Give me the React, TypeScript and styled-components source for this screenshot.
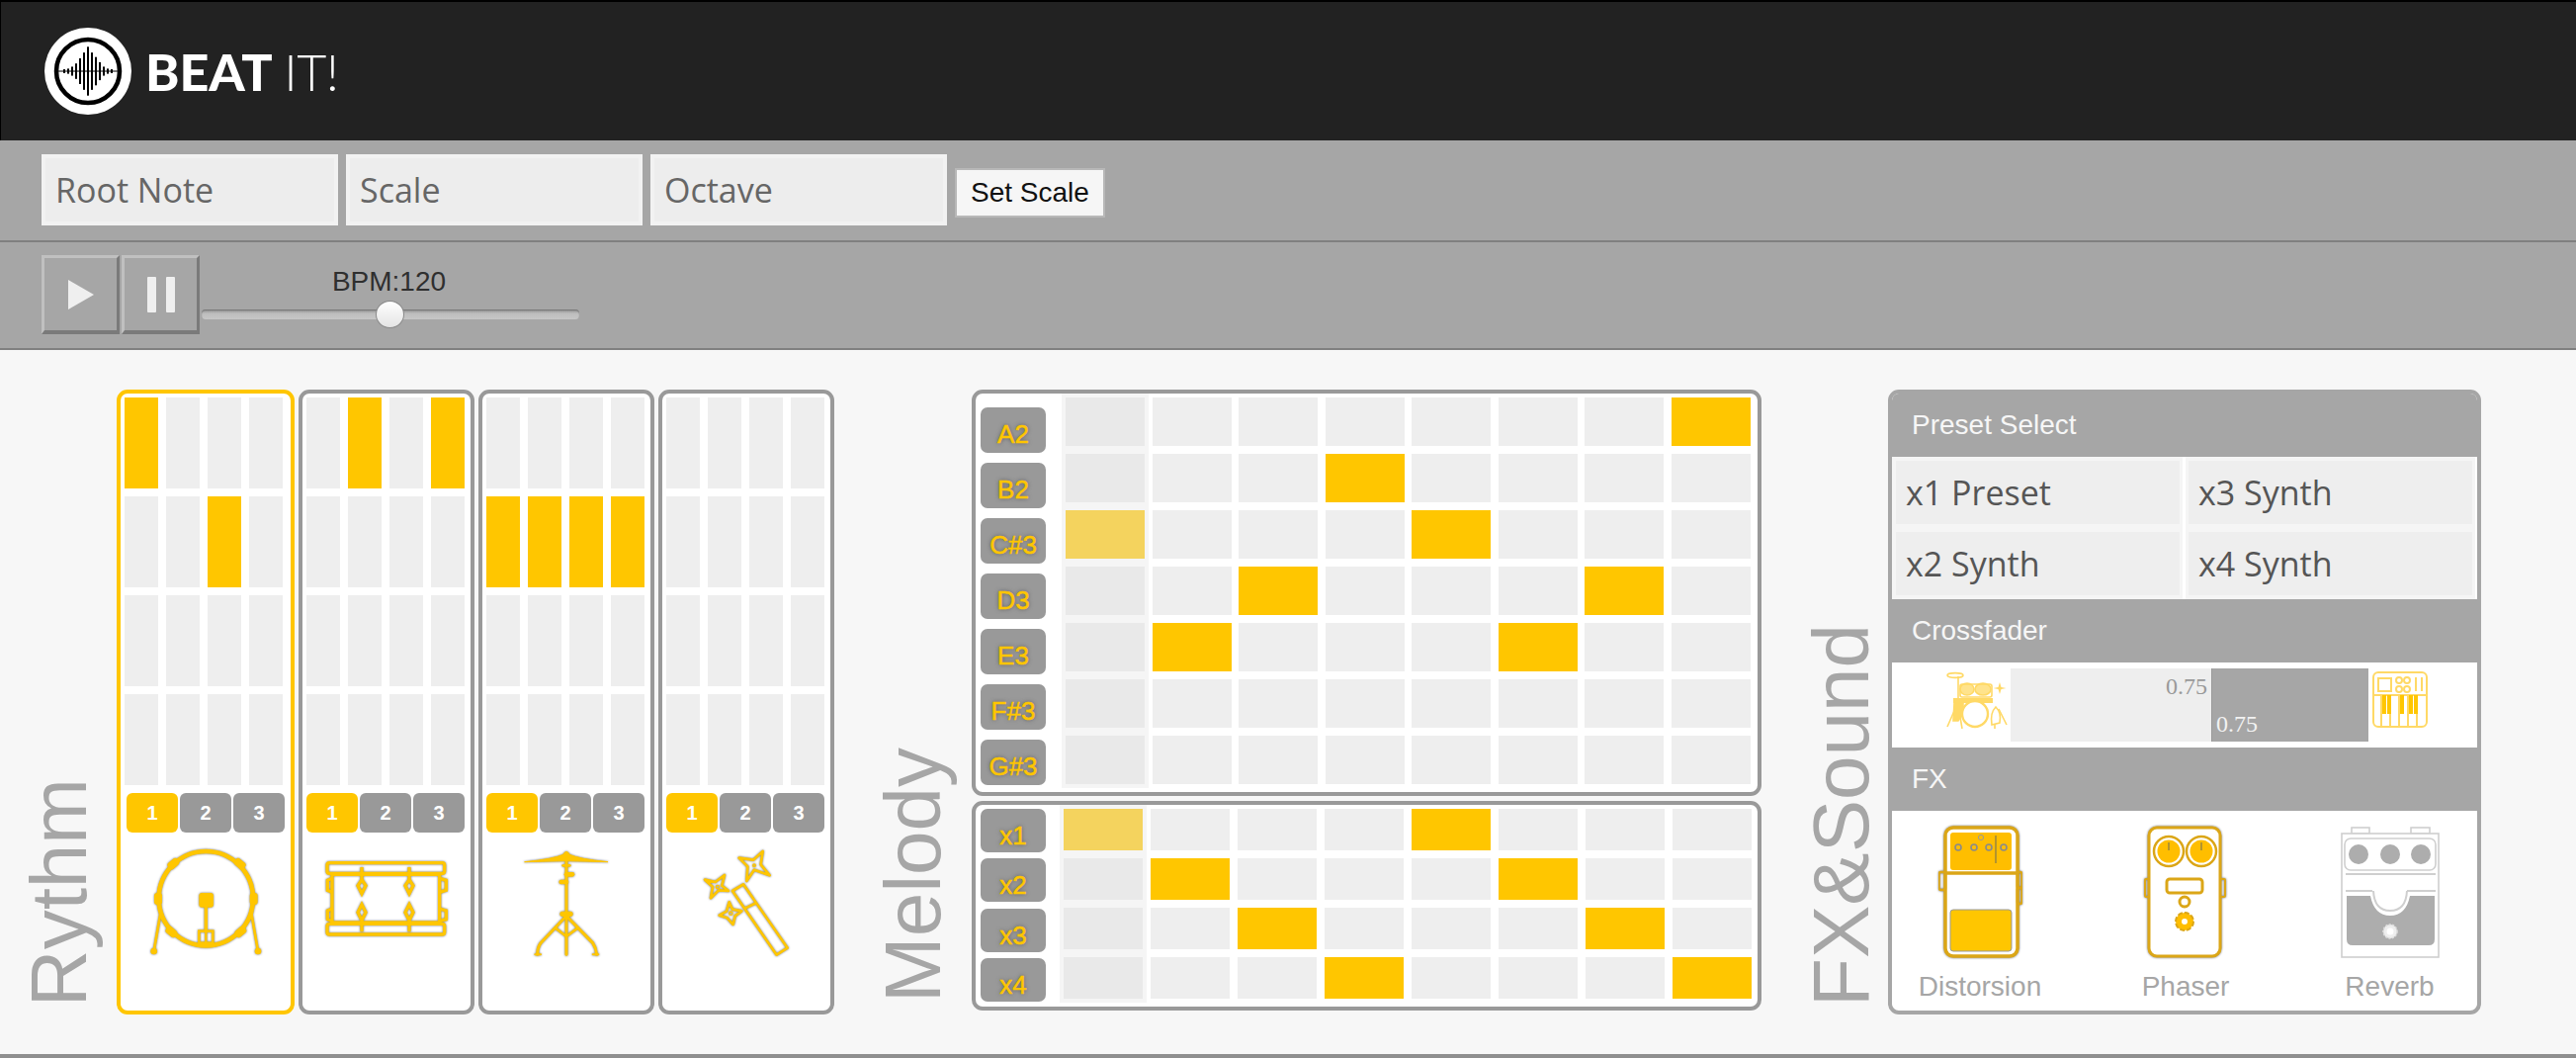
import React from "react";
import styled, { createGlobalStyle } from "styled-components";

const Y = "#ffc600";
const GREY = "#a6a6a6";
const SANS = `"Liberation Sans", Arial, sans-serif`;

const Global = createGlobalStyle`
  html, body { margin: 0; padding: 0; background: #f7f7f7; }
  body { width: 2606px; height: 1070px; overflow: hidden; font-family: ${SANS}; }
  * { box-sizing: border-box; }
`;

const Page = styled.div`
  width: 2606px;
  height: 1070px;
  display: flex;
  flex-direction: column;
  background: #f7f7f7;
`;

const Header = styled.header`
  height: 142px;
  flex: none;
  background: #222;
  border-top: 2px solid #000;
  border-left: 1px solid #000;
  display: flex;
  align-items: center;
  padding: 0 0 1px 44px;
`;
const Brand = styled.div`
  margin-left: 14px;
  font-family: Lato, sans-serif;
  font-size: 52px;
  line-height: 1;
  color: #fff;
  letter-spacing: -0.5px;
  font-weight: 300;
  b { font-weight: 900; letter-spacing: 0; margin-right: -2px; }
`;

const ScaleBar = styled.div`
  height: 103px;
  flex: none;
  background: ${GREY};
  border-bottom: 2px solid #808080;
  display: flex;
  align-items: flex-start;
  gap: 8px;
  padding: 14px 0 0 42px;
`;
const Field = styled.div`
  width: 300px;
  height: 72px;
  background: #ededed;
  border: 4px solid #f2f2f2;
  color: #666;
  font: 400 34px/64px "Open Sans", sans-serif;
  padding-left: 10px;
`;
const SetScale = styled.button`
  width: 152px;
  height: 50px;
  margin-top: 14px;
  background: #f6f6f6;
  border: 2px solid #b8b8b8;
  color: #111;
  font: 400 28px ${SANS};
  padding: 0;
`;

const Transport = styled.div`
  height: 109px;
  flex: none;
  background: ${GREY};
  border-bottom: 2px solid #808080;
  display: flex;
  align-items: flex-start;
  padding: 13px 0 0 42px;
  gap: 2px;
`;
const TransportButton = styled.button`
  width: 79px;
  height: 80px;
  padding: 0;
  background: ${GREY};
  border-style: solid;
  border-width: 3px 3px 4px 3px;
  border-color: #c0c0c0 #7a7a7a #7a7a7a #c0c0c0;
  display: flex;
  align-items: center;
  justify-content: center;
`;
const BpmBox = styled.div`
  width: 382px;
  display: flex;
  flex-direction: column;
  align-items: center;
  padding-top: 11px;
`;
const BpmLabel = styled.div`
  font-size: 28px;
  line-height: 32px;
  color: #2f2f2f;
  margin-left: -3px;
`;
const Track = styled.div`
  position: relative;
  margin-top: 12px;
  width: 382px;
  height: 10px;
  border-radius: 4px;
  background: linear-gradient(#8b8b8b, #bdbdbd 40%, #c6c6c6);
  box-shadow: inset 0 1px 1px #777;
`;
const Thumb = styled.div`
  position: absolute;
  left: 176px;
  top: -9px;
  width: 29px;
  height: 28px;
  border-radius: 50%;
  background: linear-gradient(#fff, #e4e4e4);
  border: 1px solid #8a8a8a;
`;

const Main = styled.main`
  flex: 1;
  min-height: 0;
  border-bottom: 4px solid #8f8f8f;
  padding-top: 40px;
  display: grid;
  grid-template-columns: 844px 938px 1fr;
  align-items: start;
`;
const Section = styled.section<{ $titleWidth: number }>`
  display: grid;
  grid-template-columns: ${(p) => p.$titleWidth}px auto;
  justify-content: start;
`;
const Title = styled.h2<{ $left: number }>`
  margin: 0 0 8px ${(p) => p.$left}px;
  align-self: end;
  justify-self: start;
  writing-mode: vertical-rl;
  transform: rotate(180deg);
  font: 400 80px/80px ${SANS};
  color: ${GREY};
  white-space: nowrap;
`;

const Channels = styled.div`
  display: grid;
  grid-template-columns: 180px repeat(3, 178px);
  gap: 4px;
`;
const Channel = styled.div<{ $on?: boolean }>`
  height: 632px;
  background: #fff;
  border: 4px solid ${(p) => (p.$on ? Y : "#999")};
  border-radius: 11px;
  padding: 4px 0 0 4px;
  display: flex;
  flex-direction: column;
`;
const StepGrid = styled.div`
  width: 160px;
  display: grid;
  grid-template-columns: repeat(4, 34px);
  grid-auto-rows: 92px;
  column-gap: 8px;
  row-gap: 8px;
`;
const Cell = styled.div<{ $on?: boolean; $head?: boolean }>`
  background: ${(p) =>
    p.$on ? (p.$head ? "#f4d35e" : Y) : p.$head ? "#e9e9e9" : "#eee"};
  ${(p) => (p.$head ? "box-shadow: 0 0 0 4px #f5f5f5;" : "")}
`;
const KitRow = styled.div<{ $shift?: boolean }>`
  margin: 8px 0 0 ${(p) => (p.$shift ? 2 : 0)}px;
  display: flex;
  gap: 2px;
`;
const KitButton = styled.div<{ $on?: boolean }>`
  width: 52px;
  height: 40px;
  border-radius: 6px;
  background: ${(p) => (p.$on ? Y : "#999")};
  color: #fff;
  font: 700 20px/40px ${SANS};
  text-align: center;
`;
const InstrumentIcon = styled.svg<{ $top: number; $left: number }>`
  display: block;
  margin: ${(p) => p.$top}px 0 0 ${(p) => p.$left}px;
  filter: drop-shadow(0 0 1px rgba(100, 100, 100, 0.9));
`;

const MelodyStack = styled.div`
  display: flex;
  flex-direction: column;
  gap: 5px;
`;
const MelodyPanel = styled.div<{ $height: number; $labelTop: number; $cellLeft: number }>`
  width: 799px;
  height: ${(p) => p.$height}px;
  background: #fff;
  border: 4px solid #999;
  border-radius: 11px;
  display: grid;
  grid-template-columns: 66px auto;
  column-gap: ${(p) => p.$cellLeft}px;
  justify-content: start;
  padding: 0 0 0 5px;
  & > :first-child { padding-top: ${(p) => p.$labelTop}px; }
  & > :last-child { margin-top: 4px; }
`;
const Labels = styled.div<{ $h: number; $gap: number }>`
  display: flex;
  flex-direction: column;
  gap: ${(p) => p.$gap}px;
  & > * { height: ${(p) => p.$h}px; }
`;
const NoteLabel = styled.div`
  background: #999;
  border-radius: 7px;
  color: ${Y};
  font: 400 26px/54px ${SANS};
  text-align: center;
  -webkit-text-stroke: 0.5px ${Y};
  text-shadow: 0 0 4px #555;
`;
const PadGrid = styled.div<{ $w: number; $h: number; $rg: number; $cg: number }>`
  display: grid;
  grid-template-columns: repeat(8, ${(p) => p.$w}px);
  grid-auto-rows: ${(p) => p.$h}px;
  row-gap: ${(p) => p.$rg}px;
  column-gap: ${(p) => p.$cg}px;
  align-content: start;
`;

const FxPanel = styled.div`
  width: 600px;
  height: 632px;
  background: #fff;
  border: 4px solid ${GREY};
  border-radius: 11px;
  overflow: hidden;
  display: flex;
  flex-direction: column;
`;
const FxHeader = styled.div`
  height: 64px;
  flex: none;
  background: ${GREY};
  color: #f6f6f6;
  font: 400 28px/64px ${SANS};
  padding-left: 20px;
`;
const PresetGrid = styled.div`
  height: 144px;
  flex: none;
  background:
    linear-gradient(#fff, #fff) 294px 0 / 3px 100% no-repeat,
    linear-gradient(#fff, #fff) 100% 0 / 2px 100% no-repeat,
    #f5f5f5;
  display: grid;
  grid-template-columns: 287px 287px;
  grid-auto-rows: 64px;
  column-gap: 9px;
  row-gap: 8px;
  padding: 4px 0 0 4px;
`;
const Preset = styled.div`
  background: #eee;
  color: #555;
  font: 400 34px/64px "Open Sans", sans-serif;
  padding-left: 10px;
  white-space: pre;
`;
const FaderRow = styled.div`
  height: 86px;
  flex: none;
  display: flex;
  align-items: flex-start;
  padding: 6px 0 0 55px;
`;
const FaderIcon = styled.svg<{ $top: number; $gap: number }>`
  flex: none;
  display: block;
  margin: ${(p) => p.$top}px ${(p) => p.$gap}px 0 ${(p) => p.$gap}px;
`;
const Fader = styled.div`
  margin-left: 3px;
  width: 362px;
  height: 74px;
  display: flex;
  font: 400 24px/1 "Liberation Serif", serif;
`;
const FaderSide = styled.div<{ $w: number; $dark?: boolean }>`
  width: ${(p) => p.$w}px;
  background: ${(p) => (p.$dark ? GREY : "#eee")};
  color: ${(p) => (p.$dark ? "#f2f2f2" : "#999")};
  display: flex;
  justify-content: ${(p) => (p.$dark ? "flex-start" : "flex-end")};
  align-items: ${(p) => (p.$dark ? "flex-end" : "flex-start")};
  padding: ${(p) => (p.$dark ? "0 0 6px 4px" : "6px 4px 0 0")};
  ${(p) => (p.$dark ? "border-left: 1px solid #999;" : "")}
`;
const FxGrid = styled.div`
  flex: 1;
  display: grid;
  grid-template-columns: 178px 238px 175px;
  padding-top: 15px;
`;
const FxItem = styled.div`
  display: flex;
  flex-direction: column;
  align-items: center;
  color: ${GREY};
  font: 400 28px/32px ${SANS};
  gap: 13px;
`;
const FxIcon = styled.svg<{ $soft?: boolean }>`
  display: block;
  ${(p) => (p.$soft ? "" : "filter: drop-shadow(0 0 1px rgba(100, 100, 100, 0.9));")}
`;

const Logo = () => {
  const hs = [3, 4, 7, 12, 20, 29, 38, 29, 22, 14, 7, 4, 3];
  return (
    <svg width="88" height="88" viewBox="0 0 88 88">
      <circle cx="44" cy="44" r="44" fill="#fff" />
      <circle cx="44" cy="44" r="32" fill="#fff" stroke="#000" strokeWidth="4.5" />
      <line x1="14" y1="44" x2="74" y2="44" stroke="#000" strokeWidth="1" />
      {hs.map((h, i) => (
        <rect key={i} x={44 - 1 + (i - 6) * 4} y={44 - h * 0.65} width="2" height={h * 1.3} fill="#000" />
      ))}
    </svg>
  );
};

const BassDrum = () => (
  <InstrumentIcon $top={15} $left={24} width="117" height="113" viewBox="120 200 351 339" fill="none" stroke={Y} strokeWidth="10" strokeLinecap="round">
    <circle cx="295" cy="355" r="143" strokeWidth="14" />
    <g fill={Y} stroke="none">
      <rect x="138" y="338" width="24" height="36" rx="9" />
      <rect x="428" y="338" width="24" height="36" rx="9" />
      <rect x="178" y="238" width="36" height="24" rx="9" transform="rotate(-40 196 250)" />
      <rect x="380" y="238" width="36" height="24" rx="9" transform="rotate(40 398 250)" />
      <rect x="172" y="444" width="36" height="24" rx="9" transform="rotate(40 190 456)" />
      <rect x="382" y="444" width="36" height="24" rx="9" transform="rotate(-40 400 456)" />
      <rect x="274" y="338" width="44" height="44" rx="9" />
      <circle cx="137" cy="515" r="10" />
      <circle cx="453" cy="515" r="10" />
    </g>
    <line x1="295" y1="375" x2="295" y2="455" />
    <rect x="274" y="454" width="42" height="36" strokeWidth="8" />
    <line x1="295" y1="454" x2="295" y2="490" strokeWidth="7" />
    <line x1="157" y1="400" x2="137" y2="515" strokeWidth="8" />
    <line x1="433" y1="400" x2="453" y2="515" strokeWidth="8" />
  </InstrumentIcon>
);

const Snare = () => (
  <InstrumentIcon $top={26} $left={15} width="130" height="80" viewBox="645 235 390 240" fill="none" stroke={Y} strokeWidth="10">
    <rect x="663" y="249" width="356" height="32" rx="7" />
    <rect x="663" y="434" width="356" height="32" rx="7" />
    <rect x="678" y="284" width="326" height="146" />
    {[768, 912].map((x) => (
      <g key={x}>
        <line x1={x} y1="262" x2={x} y2="300" />
        <path d={`M${x} 300 l12 18 -12 24 -12 -24z`} />
        <line x1={x} y1="425" x2={x} y2="458" />
        <path d={`M${x} 375 l12 24 -12 24 -12 -24z`} />
      </g>
    ))}
    <path d="M678 296 l-14 6 v30 l14 6" />
    <path d="M678 388 l-14 6 v26 l14 6" />
    <path d="M1004 296 l20 6 v30 l-20 6" />
    <path d="M1004 388 l20 6 v26 l-20 6" />
  </InstrumentIcon>
);

const HiHat = () => (
  <InstrumentIcon $top={15} $left={35} width="93" height="113" viewBox="140 200 279 339" fill="none" stroke={Y} strokeWidth="9" strokeLinecap="round" strokeLinejoin="round">
    <path d="M152 244 Q240 235 268 222 Q278 204 288 222 Q316 235 404 244 Q278 238 152 244Z" fill={Y} strokeWidth="3" />
    <line x1="278" y1="235" x2="278" y2="525" />
    <line x1="262" y1="305" x2="278" y2="305" strokeWidth="14" />
    <line x1="278" y1="282" x2="296" y2="282" strokeWidth="14" />
    <line x1="268" y1="255" x2="288" y2="255" strokeWidth="8" />
    <line x1="266" y1="402" x2="290" y2="402" strokeWidth="16" />
    <path d="M278 408 L200 490 Q190 505 190 525" />
    <path d="M278 408 L358 490 Q368 505 370 525" />
    <path d="M245 445 L278 470 L312 445" strokeWidth="8" />
    <line x1="183" y1="525" x2="200" y2="525" strokeWidth="6" />
    <line x1="358" y1="525" x2="375" y2="525" strokeWidth="6" />
  </InstrumentIcon>
);

const Wand = () => (
  <InstrumentIcon $top={15} $left={33} width="93" height="113" viewBox="680 200 279 339" fill="none" stroke={Y} strokeWidth="8" strokeLinejoin="round">
    <path d="M782 332 L815 312 L949 505 L916 526Z" />
    <line x1="820" y1="385" x2="855" y2="368" />
    <path d="M874 212 L868 252 L895 285 L848 268 L825 302 L828 258 L802 232 L845 238Z" />
    <path d="M758 284 L750 316 L770 332 L740 330 L716 354 L722 320 L698 298 L730 305Z" />
    <path d="M772 366 L782 388 L810 393 L790 408 L784 434 L766 414 L742 406 L764 394Z" />
    <circle cx="848" cy="255" r="4" strokeWidth="4" />
    <circle cx="737" cy="320" r="5" strokeWidth="4" />
    <circle cx="777" cy="400" r="5" strokeWidth="4" />
  </InstrumentIcon>
);

const KitIcon = () => (
  <FaderIcon $top={3} $gap={0} width="62" height="58" viewBox="0 0 62 58" fill="none" stroke="#ffd966" strokeWidth="1.6">
    <ellipse cx="9" cy="4" rx="8" ry="2.4" />
    <line x1="12" y1="5" x2="12" y2="28" />
    <ellipse cx="21" cy="18" rx="7" ry="6" fill="#ffe38c" />
    <ellipse cx="37" cy="18" rx="8" ry="6" fill="#ffe38c" />
    <rect x="14" y="13" width="32" height="13" rx="2" />
    <path d="M54 11 l1.5 5 5 1 -5 1 -1.5 5 -1.5 -5 -5 -1 5 -1z" fill="#ffd966" stroke="none" />
    <rect x="7" y="27" width="40" height="5" fill="#ffd966" stroke="none" />
    <path d="M8 32 h9 v10 l-5 8 h-5z" fill="#ffd966" />
    <circle cx="29" cy="43" r="13" strokeWidth="2.4" fill="#fff" />
    <path d="M8 40 L1 56 M14 46 L16 58" />
    <path d="M50 36 Q56 42 54 52 L46 54 Q44 42 50 36Z" fill="#fff" />
    <path d="M53 38 L61 54 M49 54 V58" />
  </FaderIcon>
);

const SynthIcon = () => (
  <FaderIcon $top={3} $gap={4} width="56" height="57" viewBox="0 0 56 57" fill="none" stroke="#ffd966" strokeWidth="2">
    <rect x="1" y="1" width="54" height="55" rx="5" />
    <line x1="1" y1="24" x2="55" y2="24" />
    <rect x="6" y="7" width="13" height="13" />
    <circle cx="27" cy="9" r="3" /><circle cx="35" cy="9" r="3" />
    <circle cx="27" cy="18" r="3" /><circle cx="35" cy="18" r="3" />
    <line x1="44" y1="6" x2="44" y2="20" /><line x1="50" y1="6" x2="50" y2="20" />
    {[9, 18, 27, 36, 45].map((x) => (
      <line key={x} x1={x} y1="24" x2={x} y2="56" />
    ))}
    {[9, 14, 27, 36, 41].map((x) => (
      <rect key={x} x={x + 1} y="24" width="4" height="19" fill={Y} stroke="none" />
    ))}
  </FaderIcon>
);

const PEDAL = "#dba617";
const Distortion = () => (
  <FxIcon width="85" height="134" viewBox="0 0 85 134" fill="none" stroke={PEDAL} strokeWidth="3.5">
    <rect x="7" y="2" width="73" height="130" rx="8" fill="#fff" />
    <rect x="0.5" y="47" width="6.5" height="18" rx="2" strokeWidth="2.5" />
    <rect x="80" y="47" width="4.5" height="16" rx="2" strokeWidth="2.5" />
    <rect x="80" y="63" width="4.5" height="16" rx="2" strokeWidth="2.5" />
    <rect x="12" y="7" width="62" height="38" rx="3" fill="#ffbe00" stroke="none" />
    <line x1="7" y1="48" x2="80" y2="48" />
    {[20, 36, 51, 66].map((x) => (
      <circle key={x} cx={x} cy="22" r="3" stroke="#8a8a8a" strokeWidth="1.6" fill="#ffbe00" />
    ))}
    <circle cx="43" cy="12" r="2.6" stroke="#999" strokeWidth="1" />
    <line x1="58" y1="10" x2="58" y2="38" stroke="#a08a3a" strokeWidth="1.6" />
    <rect x="12" y="85" width="62" height="42" rx="3" fill={Y} stroke="#999" strokeWidth="1" />
  </FxIcon>
);
const Phaser = () => (
  <FxIcon width="84" height="134" viewBox="0 0 84 134" fill="none" stroke={PEDAL} strokeWidth="3">
    <rect x="5" y="2" width="72" height="130" rx="8" fill="#fff" />
    <rect x="1" y="54" width="4" height="18" rx="1" strokeWidth="2" />
    <rect x="77" y="54" width="5" height="18" rx="1" strokeWidth="2" />
    {[25, 58].map((x) => (
      <g key={x}>
        <circle cx={x} cy="26" r="15" strokeWidth="2.5" />
        <circle cx={x} cy="26" r="11.5" fill="#ffbe00" stroke="none" />
        <line x1={x} y1="17" x2={x} y2="25" stroke="#a08a3a" strokeWidth="1.6" />
      </g>
    ))}
    <rect x="23" y="54" width="36" height="14" rx="3" />
    <circle cx="41" cy="77" r="5" fill="#fff" />
    <circle cx="41" cy="97" r="9" fill="#ffbe00" stroke={PEDAL} strokeWidth="2" strokeDasharray="5 2" />
    <circle cx="41" cy="97" r="3" fill="#fff" stroke="none" />
  </FxIcon>
);
const Reverb = () => (
  <FxIcon $soft width="100" height="134" viewBox="0 0 100 134" fill="none" stroke="#cfcfcf" strokeWidth="1.6">
    <rect x="11" y="2" width="18" height="6" />
    <rect x="71" y="2" width="19" height="6" />
    <rect x="1" y="8" width="98" height="125" fill="#fff" />
    <rect x="4" y="13" width="92" height="32" rx="6" />
    {[18, 50, 81].map((x) => (
      <circle key={x} cx={x} cy="29" r="10" fill="#adadad" stroke="none" />
    ))}
    <line x1="5" y1="49" x2="96" y2="49" strokeWidth="2" />
    <line x1="5" y1="66" x2="32" y2="66" strokeWidth="2" />
    <line x1="67" y1="66" x2="96" y2="66" strokeWidth="2" />
    <path d="M33 66 Q34 86 50 86 Q66 86 67 66" strokeWidth="2" />
    <path d="M6 71 H30 Q34 91 50 91 Q66 91 70 71 H95 V115 Q95 121 89 121 H12 Q6 121 6 115Z" fill="#adadad" stroke="none" />
    <circle cx="50" cy="107" r="7" fill="#eee" stroke="#ddd" strokeDasharray="2 1.5" />
    <circle cx="50" cy="107" r="3.5" fill="#fff" stroke="none" />
  </FxIcon>
);

const KITS: { steps: number[]; icon: React.ReactNode }[] = [
  { steps: [0, 6], icon: <BassDrum /> },
  { steps: [1, 3], icon: <Snare /> },
  { steps: [4, 5, 6, 7], icon: <HiHat /> },
  { steps: [], icon: <Wand /> },
];

const NOTES: [string, number[]][] = [
  ["A2", [7]],
  ["B2", [3]],
  ["C#3", [0, 4]],
  ["D3", [2, 6]],
  ["E3", [1, 5]],
  ["F#3", []],
  ["G#3", []],
];
const SYNTHS: [string, number[]][] = [
  ["x1", [0, 4]],
  ["x2", [1, 5]],
  ["x3", [2, 6]],
  ["x4", [3, 7]],
];

const pads = (rows: [string, number[]][]) =>
  rows.flatMap(([name, on]) =>
    Array.from({ length: 8 }, (_, c) => (
      <Cell key={name + c} $on={on.includes(c)} $head={c === 0} />
    ))
  );

export default function App() {
  return (
    <Page>
      <Global />
      <Header>
        <Logo />
        <Brand>
          <b>BEAT</b> IT!
        </Brand>
      </Header>
      <ScaleBar>
        <Field>Root Note</Field>
        <Field>Scale</Field>
        <Field>Octave</Field>
        <SetScale>Set Scale</SetScale>
      </ScaleBar>
      <Transport>
        <TransportButton aria-label="Play">
          <svg width="28" height="30" viewBox="0 0 28 30">
            <path d="M1 0 L27 15 L1 30Z" fill="#efefef" />
          </svg>
        </TransportButton>
        <TransportButton aria-label="Pause">
          <svg width="30" height="36" viewBox="0 0 30 36">
            <rect x="1" width="9" height="36" rx="1" fill="#efefef" />
            <rect x="20" width="9" height="36" rx="1" fill="#efefef" />
          </svg>
        </TransportButton>
        <BpmBox>
          <BpmLabel>BPM:120</BpmLabel>
          <Track>
            <Thumb />
          </Track>
        </BpmBox>
      </Transport>
      <Main>
        <Section $titleWidth={118}>
          <Title $left={20}>Rythm</Title>
          <Channels>
            {KITS.map((k, i) => (
              <Channel key={i} $on={i === 0}>
                <StepGrid>
                  {Array.from({ length: 16 }, (_, s) => (
                    <Cell key={s} $on={k.steps.includes(s)} />
                  ))}
                </StepGrid>
                <KitRow $shift={i === 0}>
                  <KitButton $on>1</KitButton>
                  <KitButton>2</KitButton>
                  <KitButton>3</KitButton>
                </KitRow>
                {k.icon}
              </Channel>
            ))}
          </Channels>
        </Section>
        <Section $titleWidth={139}>
          <Title $left={40}>Melody</Title>
          <MelodyStack>
            <MelodyPanel $height={411} $labelTop={14} $cellLeft={20}>
              <Labels $h={46} $gap={10}>
                {NOTES.map(([n]) => (
                  <NoteLabel key={n}>{n}</NoteLabel>
                ))}
              </Labels>
              <PadGrid $w={80} $h={49} $rg={8} $cg={7.5}>
                {pads(NOTES)}
              </PadGrid>
            </MelodyPanel>
            <MelodyPanel $height={212} $labelTop={4} $cellLeft={18}>
              <Labels $h={44} $gap={6.3}>
                {SYNTHS.map(([n]) => (
                  <NoteLabel key={n}>{n}</NoteLabel>
                ))}
              </Labels>
              <PadGrid $w={80} $h={42.3} $rg={7.7} $cg={8}>
                {pads(SYNTHS)}
              </PadGrid>
            </MelodyPanel>
          </MelodyStack>
        </Section>
        <Section $titleWidth={128}>
          <Title $left={41}>FX&amp;Sound</Title>
          <FxPanel>
            <FxHeader>Preset Select</FxHeader>
            <PresetGrid>
              <Preset>x1 Preset</Preset>
              <Preset>x3 Synth</Preset>
              <Preset>x2 Synth</Preset>
              <Preset>x4 Synth</Preset>
            </PresetGrid>
            <FxHeader>Crossfader</FxHeader>
            <FaderRow>
              <KitIcon />
              <Fader>
                <FaderSide $w={203}>0.75</FaderSide>
                <FaderSide $w={159} $dark>0.75</FaderSide>
              </Fader>
              <SynthIcon />
            </FaderRow>
            <FxHeader>FX</FxHeader>
            <FxGrid>
              <FxItem><Distortion />Distorsion</FxItem>
              <FxItem><Phaser />Phaser</FxItem>
              <FxItem><Reverb />Reverb</FxItem>
            </FxGrid>
          </FxPanel>
        </Section>
      </Main>
    </Page>
  );
}
